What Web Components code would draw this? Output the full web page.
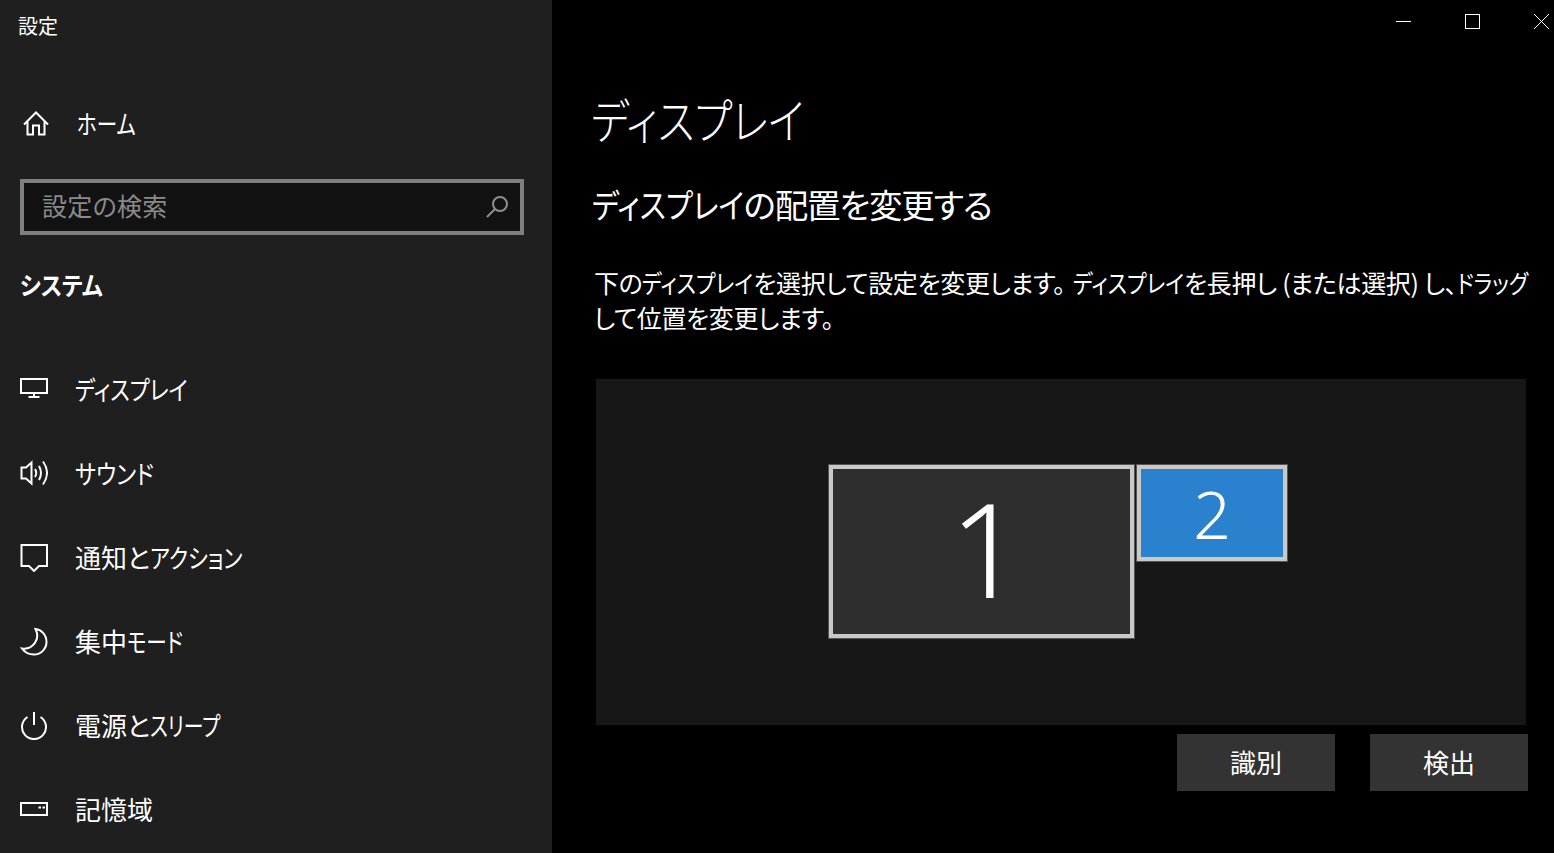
<!DOCTYPE html>
<html lang="ja"><head><meta charset="utf-8"><title>設定</title>
<style>
html,body{margin:0;padding:0;background:#000;height:100%;overflow:hidden}
body{font-family:"Noto Sans CJK JP","Noto Sans",sans-serif;color:#fff;font-feature-settings:"palt"}
</style></head><body>
<settings-app></settings-app>
<script>
const K=s=>s.replace(/[ァ-ヶー]+/g,m=>'<kana-run>'+m+'</kana-run>').replace(/。(?=<kana)/g,'<span style="margin-right:8px">。</span>');
const ICONS={
 home:'<svg width="28" height="28" viewBox="0 0 28 28" fill="none" stroke="#fff" stroke-width="2"><path d="M2 15.500 14 3.500 26 15.500M5.500 12.500V25.500H11V16.500H17V25.500H22.500V12.500"/></svg>',
 display:'<svg width="28" height="28" viewBox="0 0 28 28" fill="none" stroke="#fff" stroke-width="2"><path d="M1 4H27V18H1ZM14 18V22M8.500 22H19.500"/></svg>',
 sound:'<svg width="28" height="30" viewBox="0 0 28 30" fill="none" stroke="#fff" stroke-width="2"><path d="M1.500 9.500H6L11.500 4.500V25.500L6 20.500H1.500Z"/><path d="M15 11Q17.500 15 15 19M19 8Q23 15 19 22M23 3.500Q31 15 23 26.500"/></svg>',
 notif:'<svg width="28" height="30" viewBox="0 0 28 30" fill="none" stroke="#fff" stroke-width="2"><path d="M1.500 3H27V24H19L14 29 9 24H1.500Z"/></svg>',
 moon:'<svg width="28" height="30" viewBox="0 0 28 30" fill="none" stroke="#fff" stroke-width="2"><path d="M15.500 3C21 3.500 26.500 8.500 26.500 16A12.500 12.500 0 0 1 14 28.500C9 28.500 4.500 26 2 22.500C12 24 21 14 15.500 3Z"/></svg>',
 power:'<svg width="28" height="30" viewBox="0 0 28 30" fill="none" stroke="#fff" stroke-width="2"><path d="M14 2V15M7.500 7A12 12 0 1 0 20.500 7"/></svg>',
 storage:'<svg width="28" height="16" viewBox="0 0 28 16" fill="none" stroke="#fff" stroke-width="2"><path d="M1 2H27V14H1Z"/><path d="M18.500 6.500H21M22.500 6.500H25" stroke-width="2"/></svg>'
};
function def(name,css,html,init){
  const t=document.createElement('template');
  t.innerHTML='<style>'+css+'</style>'+html;
  customElements.define(name,class extends HTMLElement{
    constructor(){super();this.attachShadow({mode:'open'}).appendChild(t.content.cloneNode(true));}
    connectedCallback(){if(init)init(this,this.shadowRoot);}
  });
}
def('kana-run',`:host{display:inline-block;white-space:nowrap;letter-spacing:0}
 span{display:inline-block;transform:scaleX(var(--sx,.83));transform-origin:0 50%}`,
 `<span><slot></slot></span>`,
 (el,s)=>{el.style.width=s.querySelector('span').getBoundingClientRect().width+'px';});
def('nav-item',`:host{display:flex;align-items:center;height:84px;font-size:26px;color:#fff;padding-left:20px}
 .i{width:28px;display:flex;justify-content:center;align-items:center;margin-right:27px}
 svg{display:block}
 .t{position:relative;top:0;line-height:1;white-space:nowrap}`,
 `<span class="i"></span><span class="t"></span>`,
 (el,s)=>{s.querySelector('.i').innerHTML=ICONS[el.getAttribute('icon')]||'';s.querySelector('.t').innerHTML=K(el.getAttribute('label'));});
def('search-box',`:host{display:flex;align-items:center;box-sizing:border-box;width:504px;height:56px;border:4px solid #7f7f7f;background:#121212;padding:0 11px 0 18px;color:#8a8a8a;font-size:25px}
 span{flex:1;line-height:1;letter-spacing:.3px;position:relative;top:-2px}svg{display:block}`,
 `<span>設定の検索</span><svg width="24" height="24" viewBox="0 0 24 24" fill="none" stroke="#8f8f8f" stroke-width="2"><circle cx="15" cy="9" r="7"/><path d="M10 14 2 22"/></svg>`);
def('settings-sidebar',`:host{display:flex;flex-direction:column;width:552px;height:853px;flex:none;background:#1f1f1f;overflow:hidden}
 .title{height:52px;padding-left:18px;font-size:20px;line-height:52px}
 .home{display:flex;align-items:center;height:84px;margin-top:29px;padding-left:22px;font-size:26px;line-height:1;--sx:.79}
 .home svg{display:block;margin-right:27px}
 search-box{margin:14px 0 0 20px}
 h2{margin:0;padding-left:20px;font-size:25px;font-weight:700;line-height:1;margin-top:37px;height:75px;--sx:.9}`,
 `<div class="title">設定</div>
 <div class="home">${ICONS.home}<span>${K('ホーム')}</span></div>
 <search-box></search-box>
 <h2>${K('システム')}</h2>
 <nav-item icon="display" label="ディスプレイ"></nav-item>
 <nav-item icon="sound" label="サウンド" style="--sx:.86"></nav-item>
 <nav-item icon="notif" label="通知とアクション" style="--sx:.82"></nav-item>
 <nav-item icon="moon" label="集中モード" style="--sx:.79"></nav-item>
 <nav-item icon="power" label="電源とスリープ" style="--sx:.76"></nav-item>
 <nav-item icon="storage" label="記憶域"></nav-item>`);
def('window-controls',`:host{display:flex;justify-content:flex-end;height:42px;padding:14px 5px 0 0;box-sizing:border-box}
 svg{display:block;margin-left:54px}`,
 `<svg width="15" height="15" viewBox="0 0 15 15" fill="none" stroke="#fff" stroke-width="1"><path d="M0 7.500H15"/></svg>
 <svg width="15" height="15" viewBox="0 0 15 15" fill="none" stroke="#fff" stroke-width="1"><rect x=".5" y=".5" width="14" height="14"/></svg>
 <svg width="15" height="15" viewBox="0 0 15 15" fill="none" stroke="#fff" stroke-width="1"><path d="M0 0 15 15M15 0 0 15"/></svg>`);
def('monitor-tile',`:host{position:absolute;box-sizing:border-box;border:4px solid #c9c9c9;outline:1px solid #555;display:flex;align-items:center;justify-content:center;color:#fff;font-family:"Noto Sans","Open Sans",sans-serif;font-weight:300;line-height:1}`,
 `<slot></slot>`);
def('action-button',`:host{display:flex;align-items:center;justify-content:center;box-sizing:border-box;width:158px;height:57px;padding-bottom:2px;background:#333;font-size:26px;color:#fff;line-height:1}`,`<slot></slot>`);
def('display-canvas',`:host{display:block;position:relative;width:930px;height:346px;background:#171717}`,`<slot></slot>`);
def('display-panel',`:host{display:flex;flex-direction:column;flex:1;min-width:0;background:#000;overflow:hidden}
 h1{margin:0;padding-left:39px;font-size:48px;font-weight:300;line-height:68px;height:68px;margin-top:42px;--sx:.85}
 h2{margin:0;padding-left:39.500px;font-size:33.500px;font-weight:400;line-height:48px;height:48px;margin-top:28px;--sx:.87;letter-spacing:-1.200px}
 p{margin:0;padding-left:42px;white-space:nowrap;font-size:25px;line-height:35px;margin-top:37px;letter-spacing:-.33px;--sx:.85}
 display-canvas{margin:44px 0 0 44px}
 .btns{display:flex;gap:35px;justify-content:flex-end;padding-right:26px;margin-top:9px}`,
 `<window-controls></window-controls>
 <h1>${K('ディスプレイ')}</h1>
 <h2>${K('ディスプレイの配置を変更する')}</h2>
 <p>${K('下のディスプレイを選択して設定を変更します。ディスプレイを長押し (または選択) し、ドラッグ')}<br>${K('して位置を変更します。')}</p>
 <display-canvas>
   <monitor-tile style="left:233px;top:86px;width:305px;height:173px;background:#2e2e2e;font-size:130px;padding:0 0 8px 10px">1</monitor-tile>
   <monitor-tile style="left:541px;top:86px;width:150px;height:96px;background:#2a82cf;font-size:66px">2</monitor-tile>
 </display-canvas>
 <div class="btns"><action-button>識別</action-button><action-button>検出</action-button></div>`);
def('settings-app',`:host{display:flex;width:1554px;height:853px;overflow:hidden}`,`<settings-sidebar></settings-sidebar><display-panel></display-panel>`);
</script>
</body></html>
